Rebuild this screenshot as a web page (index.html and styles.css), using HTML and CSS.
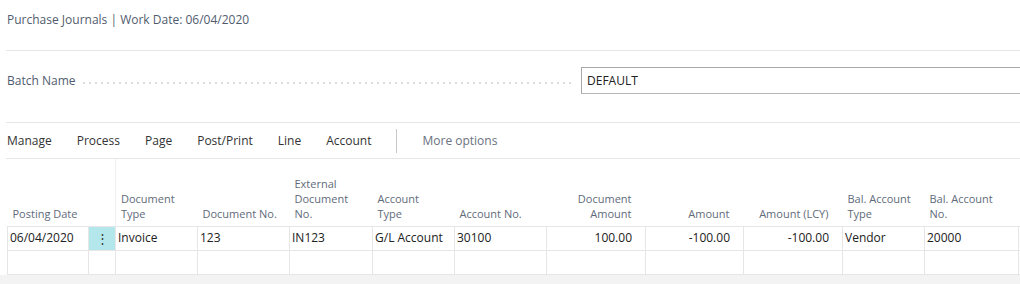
FILE: index.html
```html
<!DOCTYPE html>
<html lang="en">
<head>
<meta charset="utf-8">
<title>Purchase Journals</title>
<link rel="stylesheet" href="styles.css">
</head>
<body>
<div class="page">
  <div class="title">Purchase Journals | Work Date: 06/04/2020</div>
  <div class="batch">
    <span class="batch-label">Batch Name</span>
    <span class="leader"></span>
    <div class="input">DEFAULT</div>
  </div>
  <nav class="actions">
    <span class="action">Manage</span>
    <span class="action">Process</span>
    <span class="action">Page</span>
    <span class="action">Post/Print</span>
    <span class="action">Line</span>
    <span class="action">Account</span>
    <span class="sep"></span>
    <span class="action more">More options</span>
  </nav>
  <table class="grid">
    <colgroup>
      <col class="w81"><col class="w27"><col class="w82"><col class="w92"><col class="w83"><col class="w82"><col class="w92"><col class="w99"><col class="w98"><col class="w99"><col class="w82"><col class="w94"><col class="w2">
    </colgroup>
    <thead>
      <tr>
        <th>Posting Date</th>
        <th></th>
        <th class="divider">Document<br>Type</th>
        <th>Document No.</th>
        <th>External<br>Document<br>No.</th>
        <th>Account<br>Type</th>
        <th>Account No.</th>
        <th class="num">Document<br>Amount</th>
        <th class="num">Amount</th>
        <th class="num">Amount (LCY)</th>
        <th>Bal. Account<br>Type</th>
        <th>Bal. Account<br>No.</th>
        <th class="edge"></th>
      </tr>
    </thead>
    <tbody>
      <tr>
        <td>06/04/2020</td>
        <td class="menu">&#8942;</td>
        <td>Invoice</td>
        <td>123</td>
        <td>IN123</td>
        <td>G/L Account</td>
        <td>30100</td>
        <td class="num">100.00</td>
        <td class="num">-100.00</td>
        <td class="num">-100.00</td>
        <td>Vendor</td>
        <td>20000</td>
        <td class="edge"></td>
      </tr>
      <tr>
        <td></td><td></td><td></td><td></td><td></td><td></td><td></td><td class="num"></td><td class="num"></td><td class="num"></td><td></td><td></td><td class="edge"></td>
      </tr>
    </tbody>
  </table>
  <div class="footer"></div>
</div>
</body>
</html>
```

FILE: styles.css
```css
* { box-sizing: border-box; }
html, body { margin: 0; padding: 0; background: #ffffff; }
body {
  font-family: "Open Sans", "Noto Sans", "Liberation Sans", sans-serif;
  color: #212121;
  overflow: hidden;
  width: 1020px;
  height: 284px;
}
.page { width: 1020px; }

.title {
  margin-left: 6px;
  padding: 12px 0 22px 1px;
  line-height: 16px;
  font-size: 12px;
  color: #505c6d;
  border-bottom: 1px solid #e6e6e6;
}

.batch {
  margin-left: 6px;
  display: flex;
  align-items: center;
  padding: 16px 0 28px 1px;
  border-bottom: 1px solid #e6e6e6;
}
.batch-label {
  font-size: 12px;
  line-height: 16px;
  color: #505c6d;
  white-space: nowrap;
}
.leader {
  flex: 1;
  align-self: center;
  height: 2px;
  margin: 5px 6px 0 6px;
  background-image: radial-gradient(circle, #c2c7ce 0.6px, transparent 0.9px);
  background-size: 6px 2px;
  background-repeat: repeat-x;
}
.input {
  width: 439px;
  height: 27px;
  border: 1px solid #b6b6b6;
  border-top-color: #a8a8a8;
  border-left-color: #a8a8a8;
  border-right: none;
  font-size: 12px;
  line-height: 25px;
  padding-left: 5px;
  color: #212121;
}

.actions {
  margin-left: 6px;
  display: flex;
  align-items: center;
  gap: 25px;
  height: 36px;
  padding-left: 1px;
  border-bottom: 1px solid #e6e6e6;
  font-size: 12px;
}
.action { color: #333333; white-space: nowrap; }
.action.more { color: #6a7280; }
.sep {
  width: 1px;
  height: 24px;
  background: #c8c8c8;
}

.grid {
  margin-left: 7px;
  border-collapse: collapse;
  table-layout: fixed;
  width: 1013px;
}
.w81 { width: 81px; }
.w27 { width: 27px; }
.w82 { width: 82px; }
.w92 { width: 92px; }
.w83 { width: 83px; }
.w99 { width: 99px; }
.w98 { width: 98px; }
.w94 { width: 94px; }
.w2 { width: 2px; }

.grid th {
  height: 67px;
  vertical-align: bottom;
  text-align: left;
  font-weight: normal;
  font-size: 11px;
  line-height: 15px;
  color: #5f6b7a;
  padding: 0 4px 5px 5px;
  border-bottom: 1px solid #e6e6e6;
}
.grid th.divider { border-left: 1px solid #f0f0f0; }
.grid th.num { text-align: right; padding-right: 14px; }
.grid th.edge, .grid td.edge { padding: 0; }

.grid td {
  height: 24px;
  font-size: 12px;
  line-height: 16px;
  padding: 0 2px;
  border: 1px solid #e6e6e6;
  white-space: nowrap;
  overflow: hidden;
  color: #212121;
}
.grid td.num { text-align: right; padding-right: 13px; }
.grid td.menu {
  background: #b3e7ec;
  text-align: center;
  color: #3a3a3a;
  font-size: 13px;
  padding: 0;
}

.footer {
  height: 12px;
  background: #f3f3f3;
}
```
